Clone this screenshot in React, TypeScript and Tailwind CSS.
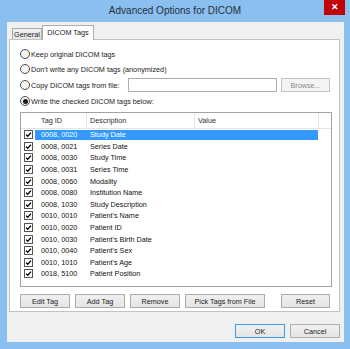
import React from "react";

const tags: [string, string][] = [
  ["0008, 0020", "Study Date"],
  ["0008, 0021", "Series Date"],
  ["0008, 0030", "Study Time"],
  ["0008, 0031", "Series Time"],
  ["0008, 0060", "Modality"],
  ["0008, 0080", "Institution Name"],
  ["0008, 1030", "Study Description"],
  ["0010, 0010", "Patient's Name"],
  ["0010, 0020", "Patient ID"],
  ["0010, 0030", "Patient's Birth Date"],
  ["0010, 0040", "Patient's Sex"],
  ["0010, 1010", "Patient's Age"],
  ["0018, 5100", "Patient Position"],
];

const Radio = ({ checked = false }: { checked?: boolean }) => (
  <div className="w-[10px] h-[10px] shrink-0 rounded-full border border-[#4a4a4a] bg-[#f6f6f6] flex items-center justify-center">
    {checked && <div className="w-[5px] h-[5px] rounded-full bg-[#1a1a1a]" />}
  </div>
);

const Check = () => (
  <svg width="9" height="9" viewBox="0 0 9 9" className="shrink-0">
    <rect x="0.5" y="0.5" width="8" height="8" fill="#fff" stroke="#555" />
    <path d="M2 4.6 L3.7 6.3 L7 2.6" fill="none" stroke="#000" strokeWidth="1.3" />
  </svg>
);

const Button = ({ label, w, disabled = false, def = false }: { label: string; w: string; disabled?: boolean; def?: boolean }) => (
  <div
    className={`${w} h-[14px] shrink-0 flex items-center justify-center border ${
      disabled
        ? "border-[#c4c4c4] bg-[#f4f4f4] text-[#8a8a8a]"
        : def
        ? "border-[#3c9ae8] bg-gradient-to-b from-[#f0f0f0] to-[#e5e5e5]"
        : "border-[#adadad] bg-gradient-to-b from-[#f0f0f0] to-[#e5e5e5]"
    }`}
  >
    {label}
  </div>
);

export default function App() {
  return (
    <div className="w-[350px] h-[349px] bg-[#8bbff0] flex flex-col font-['Liberation_Sans',Arial,sans-serif] text-[7.25px] leading-[9px] text-[#1b1b1b]">
      {/* title bar */}
      <div className="h-[22px] shrink-0 flex items-start">
        <div className="flex-1 pl-[26px] pt-[5px] text-center text-[10px] leading-[12px] text-[#26303a]">
          Advanced Options for DICOM
        </div>
        {/* close button */}
        <div className="mr-[5px] w-[21px] h-[15px] shrink-0 bg-red-700 flex items-center justify-center text-white text-[9px] leading-[9px] font-bold">
          ✕
        </div>
      </div>

      {/* client area */}
      <div className="ml-[7px] mr-[6px] h-[320px] shrink-0 bg-[#f0f0f0] flex flex-col pt-[3px]">
        {/* tabs */}
        <div className="h-[15px] flex items-end -mb-px ml-[5px] relative z-10">
          <div className="w-[30px] h-[11px] mb-px border border-b-0 border-[#acacac] bg-gradient-to-b from-[#f0f0f0] to-[#e5e5e5] flex items-center justify-center">
            General
          </div>
          <div className="w-[52px] h-[15px] border border-b-0 border-[#acacac] bg-white flex items-center justify-center pb-[2px]">
            DICOM Tags
          </div>
        </div>

        {/* tab panel */}
        <div className="ml-[2px] w-[331px] h-[273px] border border-[#c2c2c2] bg-white pl-[10px] pr-[7px] pt-[7px] flex flex-col">
          <div className="h-[14px] flex items-center gap-px">
            <Radio />
            <span>Keep original DICOM tags</span>
          </div>
          <div className="mt-px h-[14px] flex items-center gap-px">
            <Radio />
            <span>Don't write any DICOM tags (anonymized)</span>
          </div>
          <div className="mt-[2px] h-[14px] flex items-center">
            <Radio />
            <span className="ml-px w-[97px]">Copy DICOM tags from file:</span>
            <div className="w-[149px] h-[14px] border border-[#abadb3] bg-white" />
            <div className="ml-[4px]">
              <Button label="Browse..." w="w-[49px]" disabled />
            </div>
          </div>
          <div className="mt-[2px] h-[14px] flex items-center gap-px">
            <Radio checked />
            <span>Write the checked DICOM tags below:</span>
          </div>

          {/* list view */}
          <div className="mt-[4px] h-[175px] border border-[#9fa3aa] bg-white flex flex-col">
            <div className="h-[16px] shrink-0 flex border-b border-[#e5e5e5] text-[#2e2e2e]">
              <div className="w-[66px] border-r border-[#e5e5e5] pl-[20px] flex items-center">Tag ID</div>
              <div className="w-[108px] border-r border-[#e5e5e5] pl-[3px] flex items-center">Description</div>
              <div className="w-[124px] border-r border-[#e5e5e5] pl-[3px] flex items-center">Value</div>
              <div className="flex-1" />
            </div>
            {tags.map(([id, desc], i) => (
              <div key={id} className="h-[11.6px] shrink-0 flex items-center">
                <div className="w-[14px] pl-[3px] flex items-center">
                  <Check />
                </div>
                <div
                  className={`w-[283px] h-[10px] flex items-center ${
                    i === 0 ? "bg-[#3399ff] text-white" : "text-[#111]"
                  }`}
                >
                  <div className="w-[52px] pl-[6px]">{id}</div>
                  <div className="w-[108px] pl-[3px]">{desc}</div>
                </div>
              </div>
            ))}
          </div>

          {/* list buttons */}
          <div className="mt-[7px] flex items-center gap-[5px]">
            <Button label="Edit Tag" w="w-[50px]" />
            <Button label="Add Tag" w="w-[50px]" />
            <Button label="Remove" w="w-[50px]" />
            <Button label="Pick Tags from File" w="w-[80px]" />
            <div className="ml-[11px]">
              <Button label="Reset" w="w-[49px]" />
            </div>
          </div>
        </div>

        {/* dialog buttons */}
        <div className="mt-[12px] flex justify-end gap-[5px] pr-[4px]">
          <Button label="OK" w="w-[50px]" def />
          <Button label="Cancel" w="w-[50px]" />
        </div>
      </div>
    </div>
  );
}
